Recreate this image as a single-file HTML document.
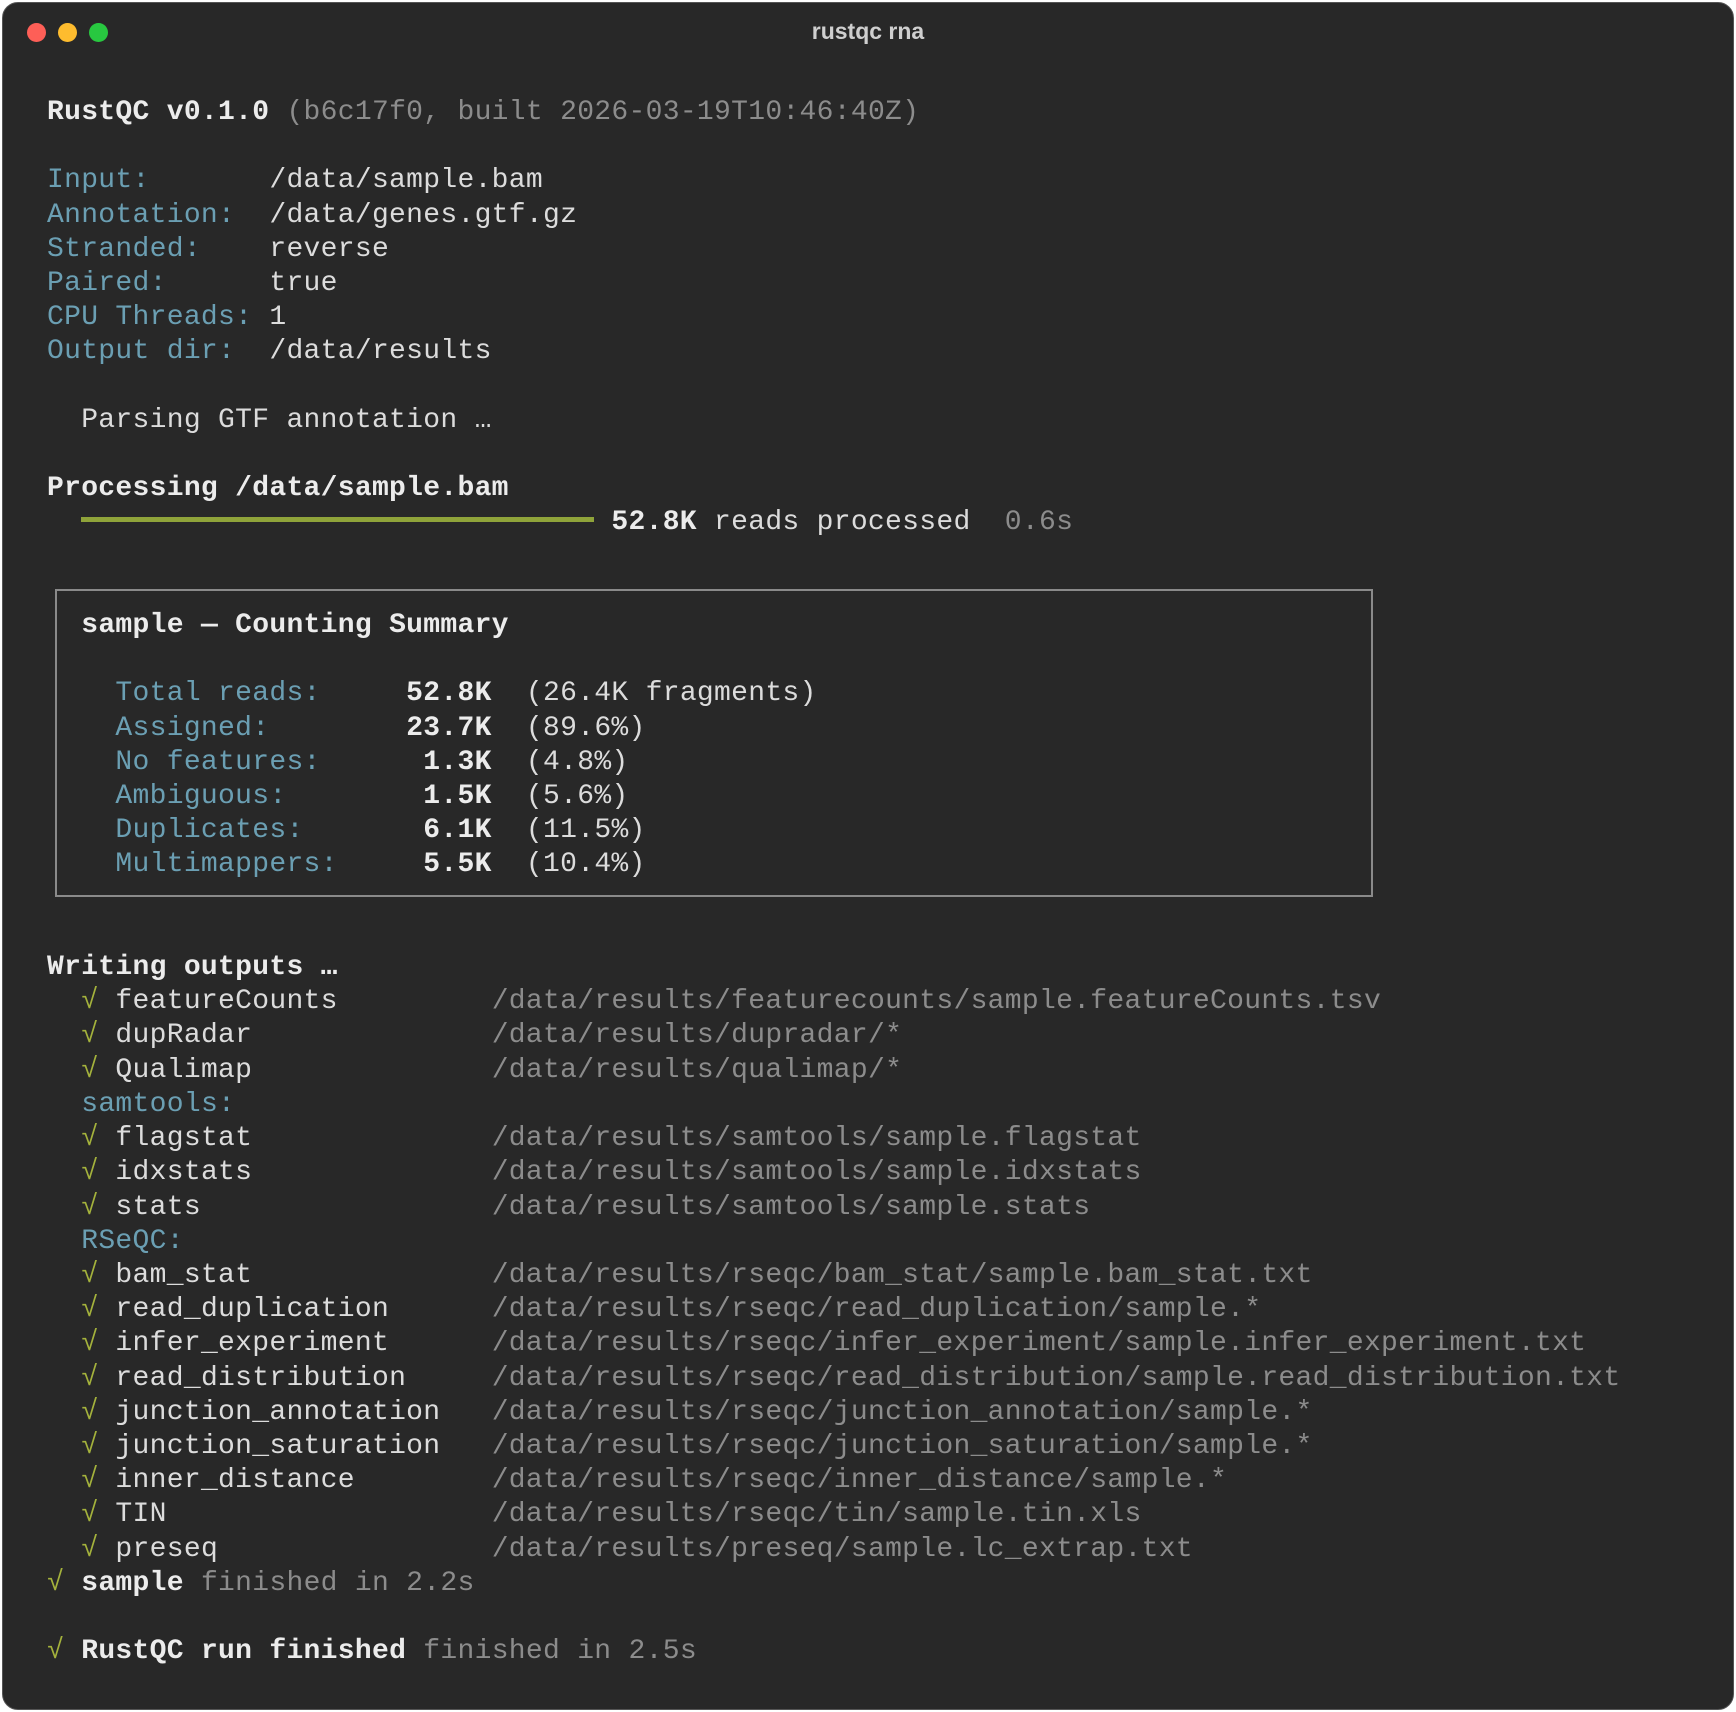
<!DOCTYPE html>
<html><head><meta charset="utf-8"><style>
html,body{margin:0;padding:0;background:#fff;width:1736px;height:1712px;overflow:hidden}
.win{position:absolute;left:2px;top:2px;width:1732px;height:1708px;background:#282828;border-radius:16px;border:1px solid #555;box-sizing:border-box}
.dot{position:absolute;top:20px;width:19px;height:19px;border-radius:50%}
.title{position:absolute;top:15px;left:0;width:100%;text-align:center;font:bold 23px "Liberation Sans",sans-serif;color:#cfcfcf}
pre{position:absolute;left:47px;top:96px;margin:0;font-family:"Liberation Mono","DejaVu Sans Mono",monospace;font-size:28px;letter-spacing:0.3px;line-height:34.2px;color:#dcdcdc}
.c{color:#6b9fb3}.g{color:#a4b23c}.d{color:#8c8c8c}b{color:#ececec}
.box{position:absolute;left:55px;top:589px;width:1318px;height:308px;border:2px solid #8a8a8a;box-sizing:border-box}
.bar{position:absolute;left:81px;top:517px;width:513px;height:5px;background:#8fa33a}
</style></head><body>
<div class="win">
<div class="dot" style="left:24px;background:#fe5f57"></div>
<div class="dot" style="left:55px;background:#febc2e"></div>
<div class="dot" style="left:86px;background:#28c840"></div>
<div class="title">rustqc rna</div>
</div>
<div class="box"></div>
<div class="bar"></div>
<pre><b>RustQC v0.1.0</b> <span class="d">(b6c17f0, built 2026-03-19T10:46:40Z)</span>

<span class="c">Input:      </span> /data/sample.bam
<span class="c">Annotation: </span> /data/genes.gtf.gz
<span class="c">Stranded:   </span> reverse
<span class="c">Paired:     </span> true
<span class="c">CPU Threads:</span> 1
<span class="c">Output dir: </span> /data/results

  Parsing GTF annotation …

<b>Processing /data/sample.bam</b>
                                 <b>52.8K</b> reads processed  <span class="d">0.6s</span>


  <b>sample — Counting Summary</b>

    <span class="c">Total reads:</span>     <b>52.8K</b>  (26.4K fragments)
    <span class="c">Assigned:</span>        <b>23.7K</b>  (89.6%)
    <span class="c">No features:</span>      <b>1.3K</b>  (4.8%)
    <span class="c">Ambiguous:</span>        <b>1.5K</b>  (5.6%)
    <span class="c">Duplicates:</span>       <b>6.1K</b>  (11.5%)
    <span class="c">Multimappers:</span>     <b>5.5K</b>  (10.4%)


<b>Writing outputs …</b>
  <span class="g">√</span> featureCounts         <span class="d">/data/results/featurecounts/sample.featureCounts.tsv</span>
  <span class="g">√</span> dupRadar              <span class="d">/data/results/dupradar/*</span>
  <span class="g">√</span> Qualimap              <span class="d">/data/results/qualimap/*</span>
  <span class="c">samtools:</span>
  <span class="g">√</span> flagstat              <span class="d">/data/results/samtools/sample.flagstat</span>
  <span class="g">√</span> idxstats              <span class="d">/data/results/samtools/sample.idxstats</span>
  <span class="g">√</span> stats                 <span class="d">/data/results/samtools/sample.stats</span>
  <span class="c">RSeQC:</span>
  <span class="g">√</span> bam_stat              <span class="d">/data/results/rseqc/bam_stat/sample.bam_stat.txt</span>
  <span class="g">√</span> read_duplication      <span class="d">/data/results/rseqc/read_duplication/sample.*</span>
  <span class="g">√</span> infer_experiment      <span class="d">/data/results/rseqc/infer_experiment/sample.infer_experiment.txt</span>
  <span class="g">√</span> read_distribution     <span class="d">/data/results/rseqc/read_distribution/sample.read_distribution.txt</span>
  <span class="g">√</span> junction_annotation   <span class="d">/data/results/rseqc/junction_annotation/sample.*</span>
  <span class="g">√</span> junction_saturation   <span class="d">/data/results/rseqc/junction_saturation/sample.*</span>
  <span class="g">√</span> inner_distance        <span class="d">/data/results/rseqc/inner_distance/sample.*</span>
  <span class="g">√</span> TIN                   <span class="d">/data/results/rseqc/tin/sample.tin.xls</span>
  <span class="g">√</span> preseq                <span class="d">/data/results/preseq/sample.lc_extrap.txt</span>
<span class="g">√</span> <b>sample</b> <span class="d">finished in 2.2s</span>

<span class="g">√</span> <b>RustQC run finished</b> <span class="d">finished in 2.5s</span></pre>
</body></html>
